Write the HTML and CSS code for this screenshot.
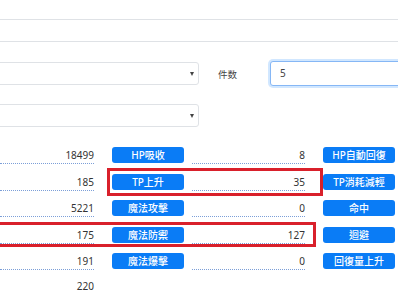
FILE: index.html
```html
<!DOCTYPE html>
<html lang="zh-Hant">
<head>
<meta charset="utf-8">
<link rel="stylesheet" href="styles.css">
</head>
<body>
<div class="page">
  <div class="field wide"></div>
  <div class="line">
    <div class="select s1"><span class="caret"></span></div>
    <span class="label">件数</span>
    <div class="field focus">5</div>
  </div>
  <div class="select s2"><span class="caret"></span></div>

  <div class="table">
    <div class="row">
      <div class="num n1">18499</div><div class="btn b1">HP吸收</div>
      <div class="num n2">8</div><div class="btn b2">HP自動回復</div>
    </div>
    <div class="row">
      <div class="num n1">185</div><div class="btn b1">TP上升</div>
      <div class="num n2">35</div><div class="btn b2">TP消耗減輕</div>
    </div>
    <div class="row">
      <div class="num n1">5221</div><div class="btn b1">魔法攻擊</div>
      <div class="num n2">0</div><div class="btn b2">命中</div>
    </div>
    <div class="row">
      <div class="num n1">175</div><div class="btn b1">魔法防禦</div>
      <div class="num n2">127</div><div class="btn b2">迴避</div>
    </div>
    <div class="row">
      <div class="num n1">191</div><div class="btn b1">魔法爆擊</div>
      <div class="num n2">0</div><div class="btn b2">回復量上升</div>
    </div>
    <div class="row last-row">
      <div class="num n1 last">220</div>
    </div>
    <div class="mark mark1"></div>
    <div class="mark mark2"></div>
  </div>
</div>
</body>
</html>
```

FILE: styles.css
```css
html, body {
  margin: 0;
  padding: 0;
  background: #ffffff;
  overflow: hidden;
}
body {
  width: 398px;
  height: 292px;
  font-family: "Noto Sans", "Noto Sans CJK TC", sans-serif;
  color: #333333;
}
.page {
  padding-top: 19px;
}
.field {
  box-sizing: border-box;
  border: 1px solid #dfe2e6;
  border-radius: 3px;
  background: #ffffff;
}
.wide {
  height: 23px;
  margin: 0 -4px;
}
.line {
  display: flex;
  align-items: center;
  margin-top: 19px;
}
.select {
  box-sizing: border-box;
  flex-shrink: 0;
  height: 23px;
  width: 203px;
  margin-left: -4px;
  border: 1px solid #dfe2e6;
  border-radius: 3px;
  display: flex;
  align-items: center;
  justify-content: flex-end;
  padding-right: 4px;
}
.s2 {
  margin-top: 18px;
}
.caret {
  width: 0;
  height: 0;
  border-left: 2.5px solid transparent;
  border-right: 2.5px solid transparent;
  border-top: 4px solid #444444;
}
.label {
  flex-shrink: 0;
  margin-left: 19px;
  width: 18px;
  font-size: 9.5px;
  color: #444444;
  white-space: nowrap;
  font-family: "Noto Sans CJK TC", sans-serif;
}
.focus {
  flex-shrink: 0;
  margin-left: 34px;
  width: 140px;
  height: 25px;
  border-color: #86b7f5;
  box-shadow: 0 0 0 2px rgba(0, 123, 255, 0.18);
  font-size: 10px;
  line-height: 23px;
  padding-left: 9px;
  color: #444444;
}
.table {
  position: relative;
  margin-top: 20px;
}
.row {
  display: flex;
  align-items: flex-start;
  height: 26.6px;
}
.last-row {
  height: 14px;
}
.num {
  box-sizing: border-box;
  flex-shrink: 0;
  height: 17px;
  line-height: 16px;
  font-size: 10px;
  text-align: right;
  border-bottom: 1px dotted #7c9fd8;
  color: #333333;
}
.last {
  height: 13px;
  line-height: 13px;
  border-bottom: none;
}
.n1 {
  width: 94px;
}
.n2 {
  width: 113px;
  margin-left: 8px;
}
.btn {
  box-sizing: border-box;
  flex-shrink: 0;
  width: 72px;
  height: 16px;
  margin-left: 18px;
  background: #0a7cf6;
  border-radius: 3px;
  color: #ffffff;
  font-size: 10px;
  line-height: 16px;
  text-align: center;
  white-space: nowrap;
  font-weight: 500;
}
.mark {
  position: absolute;
  box-sizing: border-box;
  border: 3px solid #d9202b;
}
.mark1 {
  left: 107px;
  top: 21px;
  width: 216px;
  height: 28px;
}
.mark2 {
  left: -10px;
  top: 75px;
  width: 326px;
  height: 25px;
}
```
